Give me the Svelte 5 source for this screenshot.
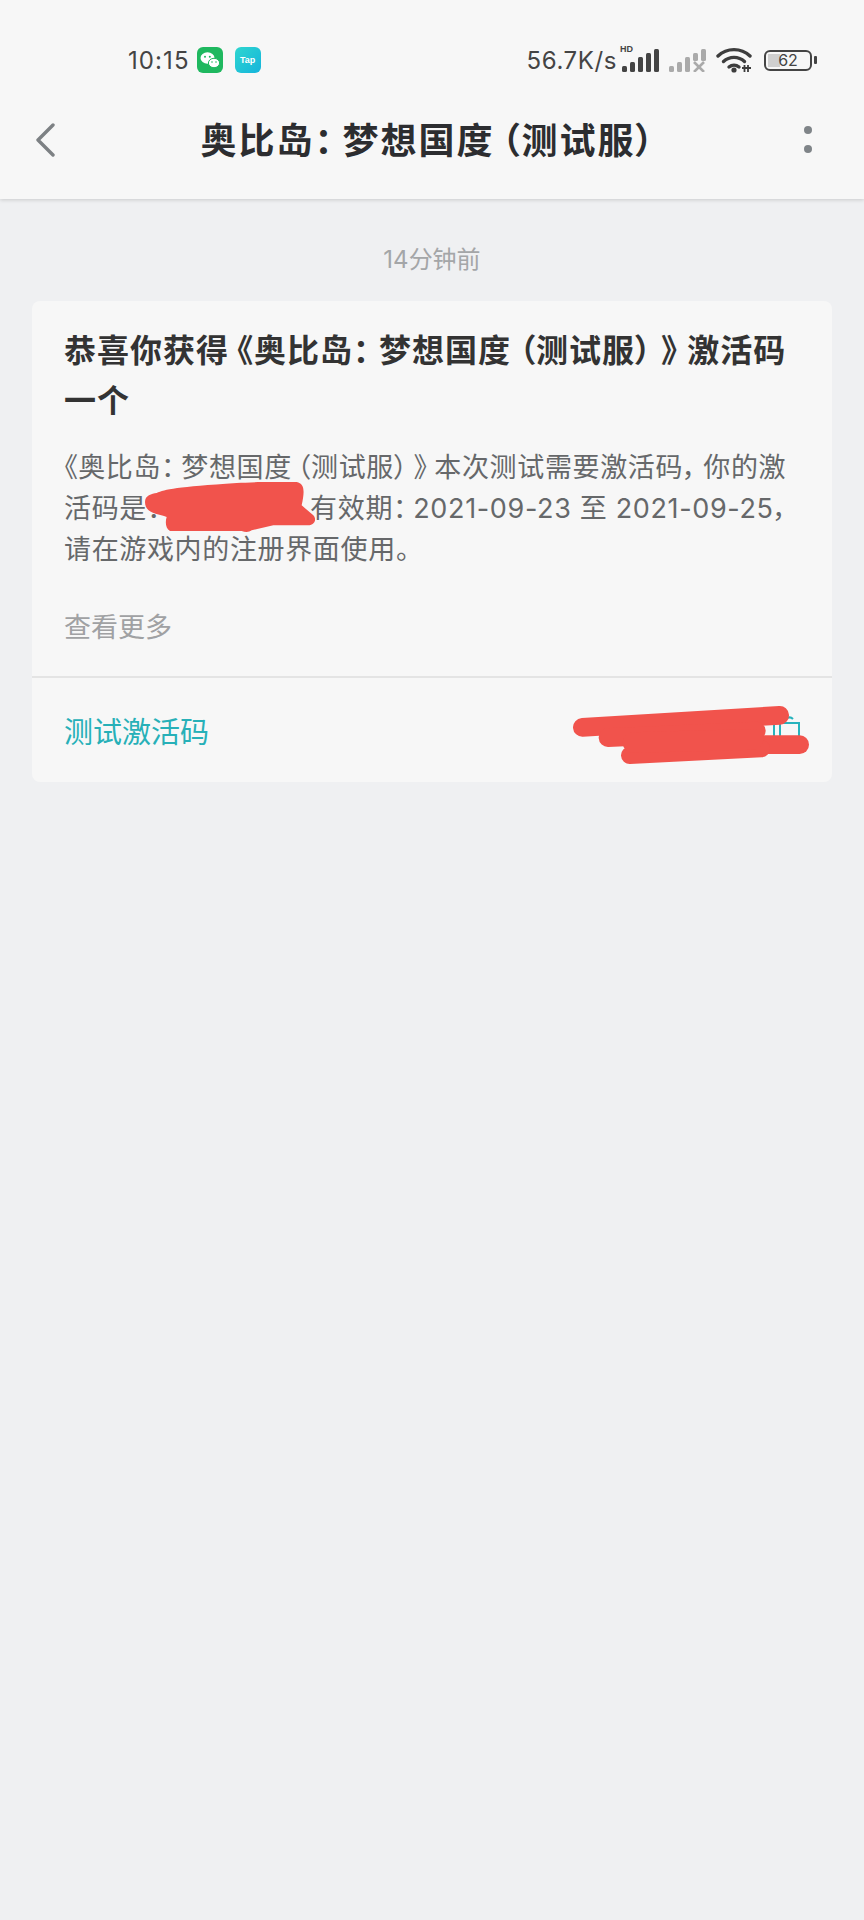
<script>
  const bars1 = [
    { x: 0, h: 6 }, { x: 8, h: 10 }, { x: 16, h: 15 }, { x: 24, h: 19 }, { x: 32, h: 23 }
  ];
</script>

<div class="page">
  <header class="top">
    <div class="status">
      <div class="left">
        <span class="clock">10:15</span>
        <svg class="app" viewBox="0 0 26 26" aria-label="微信">
          <rect width="26" height="26" rx="6" fill="#1fb85f" />
          <ellipse cx="10.5" cy="11" rx="7" ry="5.8" fill="#fff" />
          <ellipse cx="17" cy="16" rx="5.6" ry="4.7" fill="#fff" stroke="#1fb85f" stroke-width="1" />
          <circle cx="8" cy="9.8" r="1" fill="#1fb85f" />
          <circle cx="12.8" cy="9.8" r="1" fill="#1fb85f" />
          <circle cx="15" cy="15" r=".8" fill="#1fb85f" />
          <circle cx="19" cy="15" r=".8" fill="#1fb85f" />
        </svg>
        <span class="tap">Tap</span>
      </div>
      <div class="right">
        <span class="speed">56.7K/s</span>
        <div class="sig">
          <span class="hd">HD</span>
          <svg width="37" height="23" viewBox="0 0 37 23">
            {#each bars1 as b}
              <rect x={b.x} y={23 - b.h} width="5" height={b.h} rx="1.5" fill="#444" />
            {/each}
          </svg>
        </div>
        <svg class="sig2" width="37" height="23" viewBox="0 0 37 23">
          {#each bars1 as b, i}
            {#if i < 3}
              <rect x={b.x} y={23 - b.h} width="5" height={b.h} rx="1.5" fill="#aaa" />
            {:else}
              <rect x={b.x} y={i === 3 ? 4 : 0} width="5" height={i === 3 ? 8 : 12} rx="1.5" fill="#aaa" />
            {/if}
          {/each}
          <path d="M25 13l10 10M35 13L25 23" stroke="#aaa" stroke-width="2.6" fill="none" />
        </svg>
        <svg class="wifi" width="36" height="26" viewBox="0 0 36 26">
          <path d="M2 9C11 .5 25 .5 34 9" stroke="#3d3d3d" stroke-width="3.4" fill="none" stroke-linecap="round" />
          <path d="M7.5 14.5c6-5.5 15-5.5 21 0" stroke="#3d3d3d" stroke-width="3.4" fill="none" stroke-linecap="round" />
          <path d="M13 20c3-2.500 7-2.500 10 0" stroke="#3d3d3d" stroke-width="3.4" fill="none" stroke-linecap="round" />
          <circle cx="18" cy="23" r="2.600" fill="#3d3d3d" />
          <path d="M26 21h9M28.500 18v7M32 18v7" stroke="#3d3d3d" stroke-width="1.800" fill="none" />
        </svg>
        <div class="battery">
          <div class="cell"><span class="level"></span><span class="pct">62</span></div>
          <span class="nub"></span>
        </div>
      </div>
    </div>
    <div class="nav">
      <svg class="back" width="22" height="34" viewBox="0 0 22 34">
        <path d="M19 2L4 17l15 15" stroke="#7d8184" stroke-width="3.400" fill="none" stroke-linecap="round" stroke-linejoin="round" />
      </svg>
      <h1>奥比岛<span class="c">：</span>梦想国度<span class="o">（</span>测试服<span class="c">）</span></h1>
      <div class="dots"><i></i><i></i></div>
    </div>
  </header>

  <main>
    <p class="time">14分钟前</p>
    <article class="card">
      <div class="content">
        <h2>恭喜你获得<span class="o">《</span>奥比岛<span class="c">：</span>梦想国度<span class="o">（</span>测试服<span class="c">）</span><span class="c">》</span>激活码<br />一个</h2>
        <p class="body">
          《奥比岛<span class="c">：</span>梦想国度<span class="o">（</span>测试服<span class="c">）</span><span class="c">》</span>本次测试需要激活码<span class="c">，</span>你的激<br />
          活码是<span class="c">：</span><span class="gap"></span>有效期<span class="c">：</span><span class="date">2021-09-23 至 2021-09-25</span>，<br />
          请在游戏内的注册界面使用。
        </p>
        <p class="more">查看更多</p>
      </div>
      <div class="foot">
        <span class="action">测试激活码</span>
        <svg class="copy" width="30" height="20" viewBox="0 0 30 20">
          <path d="M3 20V8M9 20V7h19v13M14 7V3c3-2 6-2 8 0" stroke="#27b3bd" stroke-width="2" fill="none" />
        </svg>
      </div>
      <svg class="scrib scrib-a" viewBox="0 0 510 150" aria-hidden="true">
        <path
          d="M0 60C0 40 20 35 35 33C60 22 95 15 275 3C330 0 440-3 455 0C478 5 480 25 470 70L505 100C518 115 505 130 490 130L385 130L320 145C310 152 300 150 290 147L75 147C62 140 60 120 65 105C40 95 0 95 0 60Z"
          fill="#f1534c"
        />
      </svg>
      <svg class="scrib scrib-b" viewBox="0 0 720 180" aria-hidden="true">
        <g stroke="#f1534c" fill="none" stroke-linecap="round">
          <path d="M28 64L620 28" stroke-width="56" />
          <path d="M105 95L550 75" stroke-width="56" />
          <path d="M530 116L680 116" stroke-width="56" />
          <path d="M170 148L565 128" stroke-width="52" />
          <path d="M180 110L540 100" stroke-width="62" />
        </g>
      </svg>
    </article>
  </main>
</div>

<style>
  :global(body) {
    margin: 0;
    background: #eff0f2;
  }
  .page {
    width: 864px;
    height: 1920px;
    background: #eff0f2;
    font-family: Inter, "Noto Sans CJK SC", sans-serif;
    overflow: hidden;
  }
  .top {
    height: 199px;
    box-sizing: border-box;
    background: #f7f7f7;
    box-shadow: 0 1px 4px rgba(0, 0, 0, 0.16);
    position: relative;
  }
  .status {
    height: 119px;
    padding: 47px 47px 0 128px;
    box-sizing: border-box;
    display: flex;
    justify-content: space-between;
    align-items: flex-start;
  }
  .left,
  .right {
    display: flex;
    align-items: center;
    height: 26px;
  }
  .clock,
  .speed {
    font-size: 24px;
    color: #444;
    letter-spacing: 1.1px;
  }
  .speed {
    letter-spacing: 0.6px;
  }
  .app {
    width: 26px;
    height: 26px;
    margin-left: 7px;
  }
  .tap {
    width: 26px;
    height: 26px;
    margin-left: 12px;
    border-radius: 6px;
    background: linear-gradient(135deg, #2fd6cf, #15b4dc);
    color: #fff;
    font: 700 9px/26px "Liberation Sans", sans-serif;
    text-align: center;
  }
  .sig {
    position: relative;
    margin-left: 5px;
    height: 23px;
  }
  .hd {
    position: absolute;
    left: -2px;
    top: -4px;
    font: 700 9px/9px "Liberation Sans", sans-serif;
    color: #444;
  }
  .sig svg,
  .sig2 {
    display: block;
  }
  .sig2 {
    margin-left: 10px;
  }
  .wifi {
    margin-left: 10px;
  }
  .battery {
    display: flex;
    align-items: center;
    margin-left: 12px;
  }
  .cell {
    position: relative;
    width: 48px;
    height: 21px;
    box-sizing: border-box;
    border: 2.500px solid #444;
    border-radius: 6px;
    text-align: center;
  }
  .level {
    position: absolute;
    left: 2px;
    top: 2px;
    bottom: 2px;
    width: 12px;
    background: #cfcfcf;
  }
  .pct {
    position: relative;
    font: 400 16px/16px Inter, sans-serif;
    color: #444;
    display: block;
  }
  .nub {
    width: 3px;
    height: 8px;
    margin-left: 2px;
    background: #444;
    border-radius: 1px;
  }
  .nav {
    position: relative;
    display: flex;
    justify-content: center;
    align-items: center;
    height: 44px;
  }
  .back {
    position: absolute;
    left: 34px;
    top: 4px;
  }
  h1 {
    margin: 0;
    font-size: 36px;
    line-height: 44px;
    font-weight: 700;
    color: #2c2d30;
    font-feature-settings: "palt";
    letter-spacing: 2px;
  }
  h1 .c {
    margin-right: 8px;
  }
  h1 .o {
    margin-left: 7px;
  }
  .dots {
    position: absolute;
    right: 52px;
    top: 7px;
    display: flex;
    flex-direction: column;
    gap: 11px;
  }
  .dots i {
    width: 8px;
    height: 8px;
    border-radius: 50%;
    background: #7f8488;
  }
  main {
    padding: 0 32px;
  }
  .time {
    margin: 0;
    padding-top: 44px;
    height: 58px;
    text-align: center;
    font-size: 24px;
    line-height: 34px;
    color: #a4a6a8;
  }
  .card {
    position: relative;
    background: #f7f7f7;
    border-radius: 8px;
    height: 481px;
  }
  .content {
    height: 377px;
    box-sizing: border-box;
    padding: 25px 32px 0;
    border-bottom: 2px solid #e4e4e4;
  }
  h2 {
    margin: 0;
    font-size: 32px;
    line-height: 50px;
    font-weight: 700;
    color: #333;
    font-feature-settings: "palt";
    letter-spacing: 1px;
    white-space: nowrap;
  }
  h2 .c {
    margin-right: 9px;
  }
  h2 .o {
    margin-left: 8px;
  }
  .body {
    margin: 21px 0 0;
    font-size: 27px;
    line-height: 41px;
    color: #66686a;
    font-feature-settings: "palt";
    letter-spacing: 0.65px;
    white-space: nowrap;
  }
  .body .c {
    margin-right: 6px;
  }
  .body .o {
    margin-left: 5px;
  }
  .date {
    letter-spacing: 0.65px;
  }
  .gap {
    display: inline-block;
    width: 143px;
    height: 1px;
  }
  .more {
    margin: 38px 0 0;
    font-size: 27px;
    line-height: 40px;
    color: #a0a1a3;
  }
  .foot {
    display: flex;
    justify-content: space-between;
    align-items: center;
    height: 104px;
    padding: 0 32px;
  }
  .action {
    font-size: 29px;
    color: #27b0b8;
  }
  .copy {
    margin-right: -1px;
    margin-top: -8px;
  }
  .scrib {
    position: absolute;
    display: block;
  }
  .scrib-a {
    left: 113px;
    top: 181px;
    width: 170px;
    height: 50px;
  }
  .scrib-b {
    left: 541px;
    top: 405px;
    width: 240px;
    height: 60px;
  }
</style>
